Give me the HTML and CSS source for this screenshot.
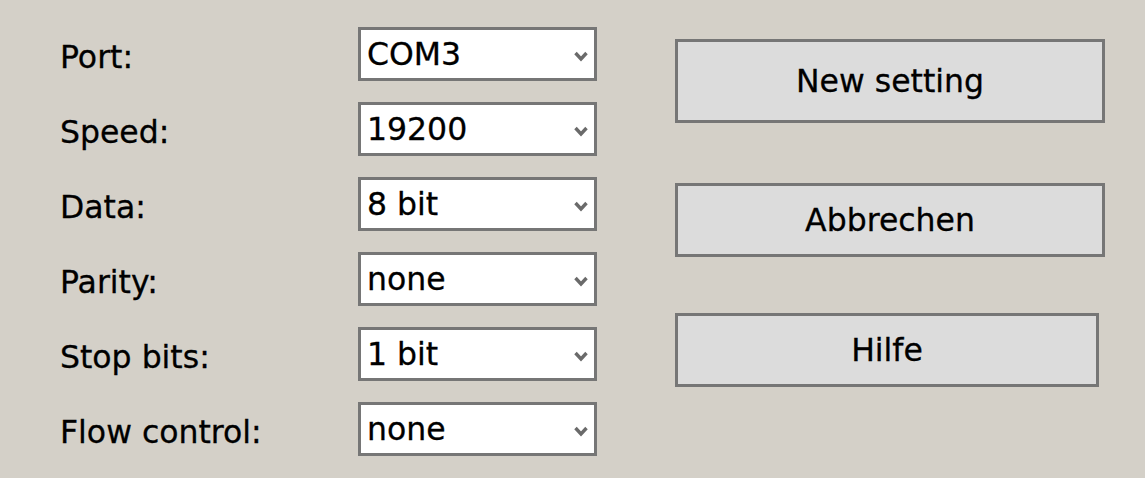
FILE: index.html
```html
<!DOCTYPE html>
<html>
<head>
<meta charset="utf-8">
<link rel="stylesheet" href="styles.css">
</head>
<body>
<div class="dialog">
  <div class="form">
    <div class="label">Port:</div>
    <div class="combo"><span class="value">COM3</span><svg class="arrow" viewBox="0 0 14 11" width="14" height="11"><polyline points="1.5,2 7,8 12.5,2" /></svg></div>
    <div class="label">Speed:</div>
    <div class="combo"><span class="value">19200</span><svg class="arrow" viewBox="0 0 14 11" width="14" height="11"><polyline points="1.5,2 7,8 12.5,2" /></svg></div>
    <div class="label">Data:</div>
    <div class="combo"><span class="value">8 bit</span><svg class="arrow" viewBox="0 0 14 11" width="14" height="11"><polyline points="1.5,2 7,8 12.5,2" /></svg></div>
    <div class="label">Parity:</div>
    <div class="combo"><span class="value">none</span><svg class="arrow" viewBox="0 0 14 11" width="14" height="11"><polyline points="1.5,2 7,8 12.5,2" /></svg></div>
    <div class="label">Stop bits:</div>
    <div class="combo"><span class="value">1 bit</span><svg class="arrow" viewBox="0 0 14 11" width="14" height="11"><polyline points="1.5,2 7,8 12.5,2" /></svg></div>
    <div class="label">Flow control:</div>
    <div class="combo"><span class="value">none</span><svg class="arrow" viewBox="0 0 14 11" width="14" height="11"><polyline points="1.5,2 7,8 12.5,2" /></svg></div>
  </div>
  <div class="buttons">
    <div class="btn btn-default">New setting</div>
    <div class="btn btn-cancel">Abbrechen</div>
    <div class="btn btn-help">Hilfe</div>
  </div>
</div>
</body>
</html>
```

FILE: styles.css
```css
html, body {
  margin: 0;
  padding: 0;
  background: #d4d0c8;
}
body {
  width: 1145px;
  height: 478px;
  overflow: hidden;
  font-family: "DejaVu Sans", "Liberation Sans", sans-serif;
  font-size: 31.5px;
  color: #000;
  -webkit-text-stroke: 0.3px #000;
}
.dialog {
  display: flex;
  align-items: flex-start;
  padding: 27px 0 0 60px;
}
.form {
  display: grid;
  grid-template-columns: 298px 239px;
  grid-auto-rows: 54px;
  row-gap: 21px;
}
.label {
  line-height: 54px;
  padding-top: 3px;
  height: 51px;
  white-space: nowrap;
}
.combo {
  box-sizing: border-box;
  height: 54px;
  background: #fff;
  border: 3px solid #767676;
  display: flex;
  align-items: center;
  padding: 0 6px;
  line-height: 48px;
}
.value {
  flex: 1;
  white-space: nowrap;
}
.arrow {
  margin-top: 4px;
  margin-right: 0;
}
.arrow polyline {
  fill: none;
  stroke: #6a6a6a;
  stroke-width: 3.4;
}
.buttons {
  margin-left: 78px;
  padding-top: 12px;
  display: flex;
  flex-direction: column;
  align-items: flex-start;
}
.btn {
  box-sizing: border-box;
  background: #dcdcdc;
  border: 3px solid #767676;
  display: flex;
  align-items: center;
  justify-content: center;
  width: 430px;
  height: 74px;
  white-space: nowrap;
}
.btn-default {
  height: 84px;
}
.btn-cancel {
  margin-top: 60px;
}
.btn-help {
  margin-top: 56px;
  width: 424px;
}
```
